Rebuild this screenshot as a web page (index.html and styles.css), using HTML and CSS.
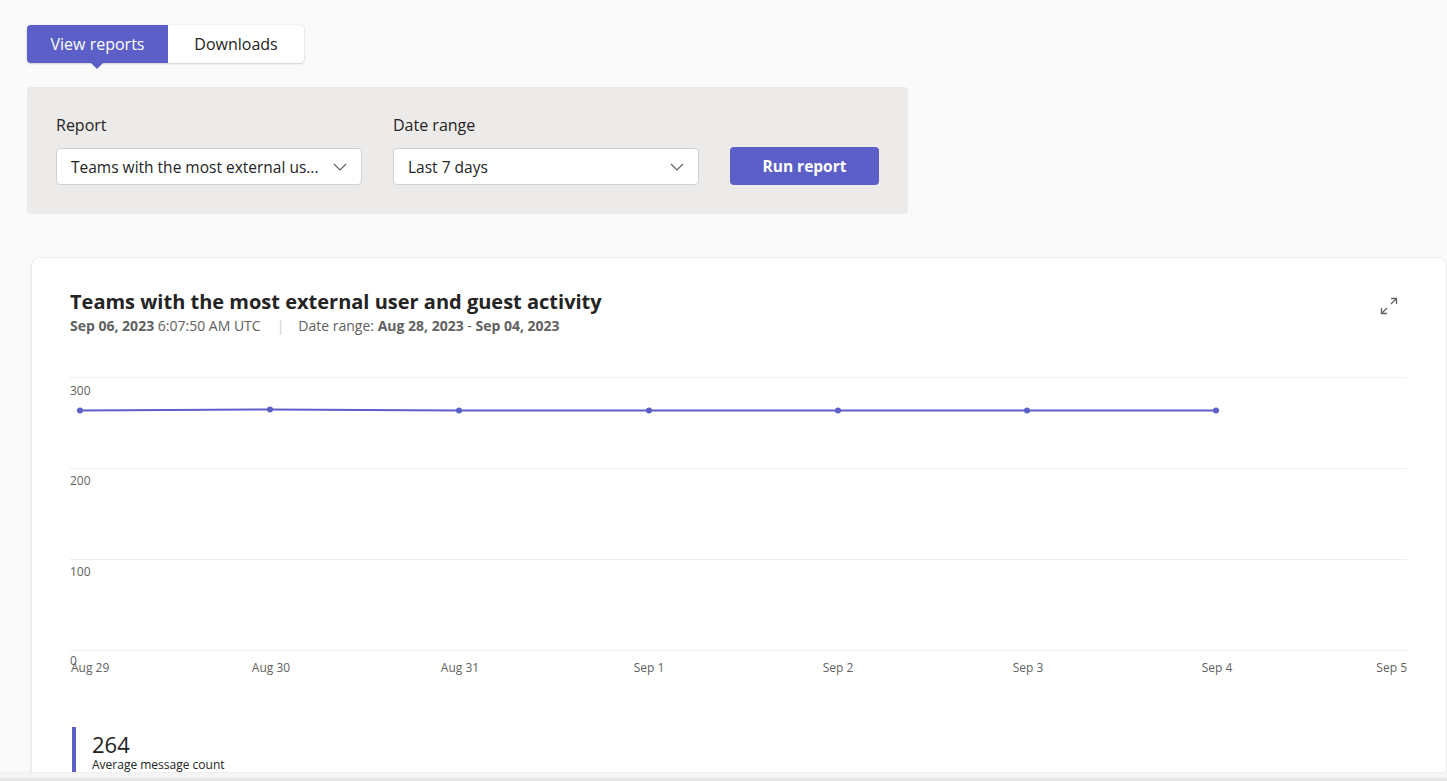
FILE: index.html
```html
<!DOCTYPE html>
<html>
<head>
<meta charset="utf-8">
<link rel="stylesheet" href="styles.css">
</head>
<body>
<div class="viewport">
  <main class="page">
    <div class="tabs">
      <button class="tab tab-active">View reports</button>
      <button class="tab">Downloads</button>
    </div>

    <section class="filters">
      <div class="field">
        <label class="field-label">Report</label>
        <div class="select">
          <span class="select-text">Teams with the most external us...</span>
          <svg class="chev" width="14" height="8" viewBox="0 0 14 8"><path d="M1 1 L7 7 L13 1" fill="none" stroke="#616161" stroke-width="1.2"/></svg>
        </div>
      </div>
      <div class="field">
        <label class="field-label">Date range</label>
        <div class="select">
          <span class="select-text">Last 7 days</span>
          <svg class="chev" width="14" height="8" viewBox="0 0 14 8"><path d="M1 1 L7 7 L13 1" fill="none" stroke="#616161" stroke-width="1.2"/></svg>
        </div>
      </div>
      <button class="run-btn">Run report</button>
    </section>

    <section class="card">
      <header class="card-head">
        <div>
          <h1 class="card-title">Teams with the most external user and guest activity</h1>
          <div class="card-sub">
            <b>Sep 06, 2023</b> 6:07:50 AM UTC<span class="sep">|</span>Date range: <b>Aug 28, 2023</b> - <b>Sep 04, 2023</b>
          </div>
        </div>
        <svg class="expand" width="18" height="18" viewBox="0 0 18 18" fill="none" stroke="#616161" stroke-width="1.3">
          <path d="M11 1.5 H16.5 V7"/>
          <path d="M16.5 1.5 L11 7"/>
          <path d="M1.5 11 V16.5 H7"/>
          <path d="M1.5 16.5 L7 11"/>
        </svg>
      </header>

      <svg class="chart" width="1337" height="310" viewBox="0 0 1337 310">
        <g stroke="#eeeeee" stroke-width="1">
          <line x1="0" y1="7.5" x2="1337" y2="7.5"/>
          <line x1="0" y1="98.5" x2="1337" y2="98.5"/>
          <line x1="0" y1="189.5" x2="1337" y2="189.5"/>
          <line x1="0" y1="280.5" x2="1337" y2="280.5"/>
        </g>
        <g class="axis-text">
          <text x="0" y="25">300</text>
          <text x="0" y="115">200</text>
          <text x="0" y="206">100</text>
          <text x="0" y="295">0</text>
        </g>
        <g class="axis-text">
          <text x="1" y="302">Aug 29</text>
          <text x="201" y="302" text-anchor="middle">Aug 30</text>
          <text x="390" y="302" text-anchor="middle">Aug 31</text>
          <text x="579" y="302" text-anchor="middle">Sep 1</text>
          <text x="768" y="302" text-anchor="middle">Sep 2</text>
          <text x="958" y="302" text-anchor="middle">Sep 3</text>
          <text x="1147" y="302" text-anchor="middle">Sep 4</text>
          <text x="1337" y="302" text-anchor="end">Sep 5</text>
        </g>
        <polyline points="10,40.5 200,39.5 389,40.5 579,40.5 768,40.5 957,40.5 1146,40.5" fill="none" stroke="#5b5fc7" stroke-width="2"/>
        <g fill="#5b5fc7">
          <circle cx="10" cy="40.5" r="3"/>
          <circle cx="200" cy="39.5" r="3"/>
          <circle cx="389" cy="40.5" r="3"/>
          <circle cx="579" cy="40.5" r="3"/>
          <circle cx="768" cy="40.5" r="3"/>
          <circle cx="957" cy="40.5" r="3"/>
          <circle cx="1146" cy="40.5" r="3"/>
        </g>
      </svg>

      <div class="summary">
        <div class="summary-value">264</div>
        <div class="summary-label">Average message count</div>
      </div>
    </section>
  </main>
  <div class="hscroll"></div>
</div>
</body>
</html>
```

FILE: styles.css
```css
* { box-sizing: border-box; }
html, body { margin: 0; padding: 0; }
body {
  font-family: "Segoe UI", "Open Sans", "Noto Sans", sans-serif;
  color: #242424;
  background: #fafafa;
  overflow: hidden;
}
.viewport {
  height: 781px;
  display: flex;
  flex-direction: column;
}
.page {
  height: 772px;
  overflow: hidden;
  padding: 25px 1px 0 27px;
  flex: none;
}
.hscroll {
  flex: 1;
  background: #f5f5f5;
  border-bottom: 3px solid #e6e6e6;
  border-top: 1px solid #f0f0f0;
}

/* Tabs */
.tabs {
  display: inline-flex;
  height: 38px;
  border-radius: 4px;
  background: #fff;
  box-shadow: 0 0 2px rgba(0,0,0,0.12), 0 1px 2px rgba(0,0,0,0.14);
}
.tab {
  font-family: inherit;
  font-size: 16px;
  border: 0;
  background: transparent;
  color: #242424;
  height: 38px;
  width: 136px;
  padding: 0;
  border-radius: 0 4px 4px 0;
}
.tab-active {
  width: 141px;
  background: #5b5fc7;
  color: #fff;
  border-radius: 4px 0 0 4px;
  position: relative;
}
.tab-active::after {
  content: "";
  position: absolute;
  left: 64px;
  bottom: -6px;
  border-left: 6px solid transparent;
  border-right: 6px solid transparent;
  border-top: 6px solid #5b5fc7;
}

/* Filters */
.filters {
  margin-top: 24px;
  width: 881px;
  height: 127px;
  background: #edebe9;
  border-radius: 4px;
  padding: 27px 29px 29px 29px;
  display: flex;
  align-items: flex-end;
  gap: 31px;
}
.field { display: flex; flex-direction: column; }
.field-label {
  font-size: 16px;
  line-height: 20px;
  margin-bottom: 13px;
  color: #242424;
}
.select {
  width: 306px;
  height: 37px;
  background: #fff;
  border: 1px solid #d1d1d1;
  border-radius: 4px;
  display: flex;
  align-items: center;
  justify-content: space-between;
  padding: 0 14px 0 14px;
}
.select-text { font-size: 15.5px; color: #242424; white-space: nowrap; }
.chev { flex: none; }
.run-btn {
  width: 149px;
  height: 38px;
  border: 0;
  border-radius: 4px;
  background: #5b5fc7;
  color: #fff;
  font-family: inherit;
  font-weight: 700;
  font-size: 15.5px;
}

/* Card */
.card {
  margin-top: 44px;
  margin-left: 5px;
  background: #fff;
  border-radius: 8px;
  box-shadow: 0 0 2px rgba(0,0,0,0.12), 0 2px 4px rgba(0,0,0,0.10);
  padding: 30px 39px 40px 38px;
}
.card-head {
  display: flex;
  justify-content: space-between;
  align-items: flex-start;
}
.card-title {
  margin: 0;
  font-size: 20px;
  line-height: 28px;
  font-weight: 700;
  color: #242424;
}
.card-sub {
  font-size: 14px;
  line-height: 18px;
  color: #616161;
  margin-top: 1px;
}
.card-sub b { font-weight: 700; }
.sep { color: #d1d1d1; margin: 0 14px 0 16px; }
.expand { margin-top: 9px; margin-right: 9px; }

.chart { display: block; margin-top: 35px; }
.axis-text text {
  font-family: "Segoe UI", "Open Sans", "Noto Sans", sans-serif;
  font-size: 12px;
  fill: #616161;
}

.summary {
  margin-top: 47px;
  margin-left: 2px;
  border-left: 4px solid #5b5fc7;
  padding: 4px 0 4px 16px;
}
.summary-value { font-size: 22px; line-height: 26px; color: #242424; }
.summary-label { font-size: 12px; line-height: 16px; color: #242424; }
```
